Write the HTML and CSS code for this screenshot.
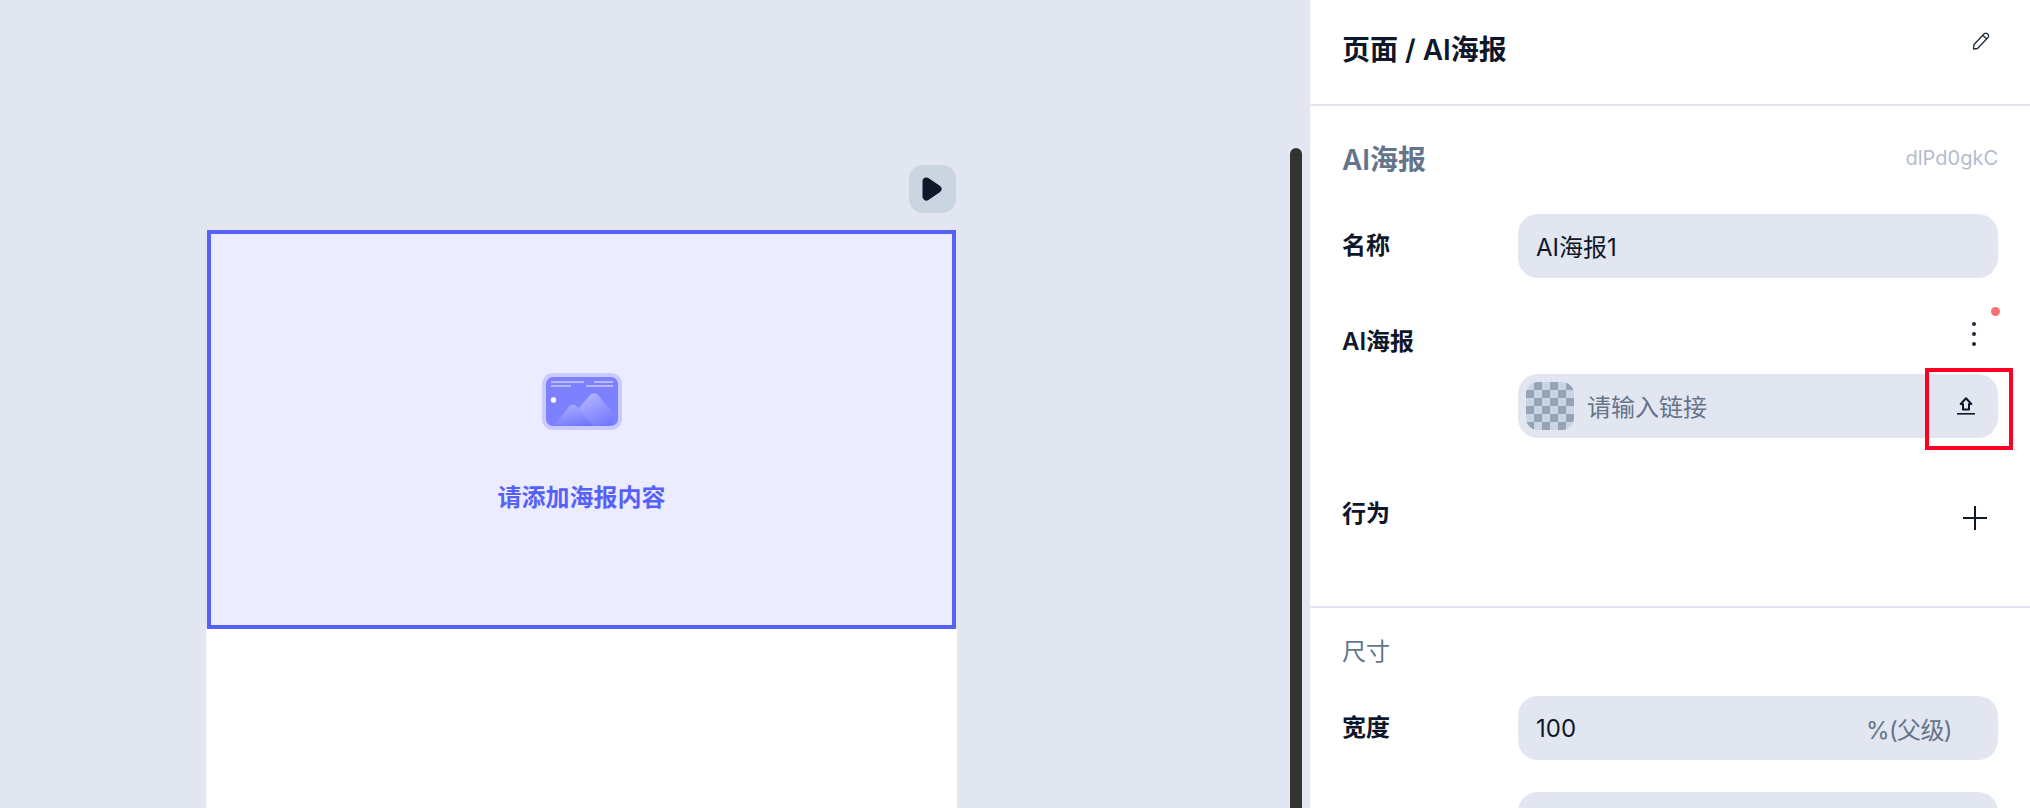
FILE: index.html
```html
<!DOCTYPE html>
<html lang="en">
<head>
    <meta charset="UTF-8">
    <meta name="viewport" content="width=device-width, initial-scale=1.0">
    <title>AI海报</title>
    <link rel="stylesheet" href="styles.css">
</head>
<body>

    <!-- Canvas -->
    <div class="canvas">
        <div class="page">
            <div class="toolbar">
                <button class="play-btn">
                    <svg width="20" height="24" viewBox="0 0 20 24"><path d="M4.500 4.500 L15.500 12 L4.500 19.500 Z" fill="#0f172a" stroke="#0f172a" stroke-width="8" stroke-linejoin="round"/></svg>
                </button>
            </div>
            <div class="poster">
                <svg class="poster-icon" width="80" height="57" viewBox="0 0 80 57">
                    <defs>
                        <linearGradient id="hillBack" x1="0.2" y1="0" x2="0.8" y2="1">
                            <stop offset="0" stop-color="#b5b7ff"/>
                            <stop offset="1" stop-color="#7377fc"/>
                        </linearGradient>
                        <linearGradient id="hillFront" x1="0.3" y1="0" x2="0.8" y2="1">
                            <stop offset="0" stop-color="#abaeff"/>
                            <stop offset="1" stop-color="#7074fb"/>
                        </linearGradient>
                    </defs>
                    <rect x="0" y="0" width="80" height="57" rx="11" fill="#c9cbff"/>
                    <rect x="4" y="4" width="72" height="49" rx="7" fill="#7d81ff"/>
                    <path d="M9 9H42M52 9H71M9 13H29M44 13H71" stroke="#c9cbff" stroke-width="1.5"/>
                    <circle cx="11.500" cy="27" r="2.700" fill="#fff"/>
                    <path d="M36 36 L48 22 Q52 18 56 22 L71 40 V47 Q71 53 65 53 H40Z" fill="url(#hillBack)"/>
                    <path d="M12 53 L27 33.500 Q31 29.500 35 33.500 L51 53Z" fill="url(#hillFront)"/>
                </svg>
                <p class="poster-text">请添加海报内容</p>
            </div>
            <div class="page-blank"></div>
        </div>
        <div class="scrollbar"></div>
    </div>

    <!-- Settings panel -->
    <div class="panel">
        <div class="panel-head">
            <h2>页面 / AI海报</h2>
            <svg class="edit-icon" width="20" height="20" viewBox="0 0 20 20" fill="none" stroke="#1e293b" stroke-width="1.300" stroke-linejoin="round">
                <path d="M3 13.500 L13.500 2.500 Q15 1.500 16.500 2.800 L17.500 4 Q18 5.500 17 6.500 L6.500 17.500 L2.500 18 Z"/>
                <path d="M12 4.500 L15.800 8"/>
            </svg>
        </div>

        <div class="section">
            <div class="section-head">
                <h3>AI海报</h3>
                <span class="comp-id">dlPd0gkC</span>
            </div>

            <div class="row row-name">
                <label>名称</label>
                <div class="field field-cjk">AI海报1</div>
            </div>

            <div class="image-head">
                <label>AI海报</label>
                <div class="more">
                    <i></i><i></i><i></i>
                    <span class="red-dot"></span>
                </div>
            </div>
            <div class="field field-cjk image-field">
                <div class="checker"></div>
                <span class="placeholder">请输入链接</span>
                <svg class="upload-icon" width="18" height="18" viewBox="0 0 18 18" fill="none" stroke="#0f172a">
                    <path d="M9 1.300 L14.300 7 H12 V12.500 H6 V7 H3.700 Z" stroke-width="2" stroke-linejoin="round"/>
                    <path d="M0 16.800 H18" stroke-width="1.600"/>
                </svg>
                <div class="mark-box"></div>
            </div>

            <div class="row-action">
                <label>行为</label>
                <svg class="plus-icon" width="26" height="26" viewBox="0 0 26 26" stroke="#0f172a" stroke-width="2"><path d="M13 1V25M1 13H25"/></svg>
            </div>
        </div>

        <div class="section section-size">
            <div class="section-title">尺寸</div>
            <div class="row">
                <label>宽度</label>
                <div class="field">100<span class="unit">%(父级)</span></div>
            </div>
            <div class="row row-next">
                <div class="field"></div>
            </div>
        </div>
    </div>

</body>
</html>
```

FILE: styles.css
```css
* {
    box-sizing: border-box;
}

body {
    font-family: Inter, "Noto Sans CJK SC", sans-serif;
    background-color: #e2e6f0;
    color: #0f172a;
    margin: 0;
    display: flex;
    height: 100vh;
    overflow: hidden;
}

/* Canvas */
.canvas {
    position: relative;
    flex: 1;
    padding: 165px 0 0 206px;
}

.page {
    width: 751px;
    height: 100%;
    display: flex;
    flex-direction: column;
}

.toolbar {
    display: flex;
    justify-content: flex-end;
    margin-bottom: 17px;
    padding-right: 1px;
}

.play-btn {
    width: 47.500px;
    height: 48px;
    border: none;
    padding: 0;
    border-radius: 14px;
    background-color: #cbd5e1;
    display: flex;
    align-items: center;
    justify-content: center;
}

.poster {
    height: 399px;
    flex-shrink: 0;
    margin: 0 1px;
    border: 4px solid #5660fa;
    background-color: #ebecff;
    display: flex;
    flex-direction: column;
    align-items: center;
    padding-top: 139px;
}

.poster-icon {
    display: block;
}

.poster-text {
    margin: 52px 0 0;
    font-size: 24px;
    line-height: 32px;
    font-weight: 600;
    color: #5660fa;
}

.page-blank {
    flex: 1;
    background-color: #fff;
}

.scrollbar {
    position: absolute;
    right: 8px;
    top: 148px;
    bottom: 0;
    width: 12px;
    border-radius: 6px 6px 0 0;
    background-color: #333330;
}

/* Settings panel */
.panel {
    width: 720px;
    background-color: #fff;
}

.panel-head {
    height: 106px;
    border-bottom: 2px solid #e2e6f0;
    display: flex;
    justify-content: space-between;
    padding: 31px 39px 0 32px;
}

.panel-head h2 {
    margin: 0;
    font-size: 28px;
    line-height: 38px;
    font-weight: 600;
}

.section {
    padding: 0 32px;
}

.section-head {
    display: flex;
    justify-content: space-between;
    align-items: center;
    height: 40px;
    margin-top: 32px;
}

.section-head h3 {
    margin: 0;
    font-size: 28px;
    font-weight: 600;
    color: #64748b;
}

.comp-id {
    font-size: 20px;
    color: #b4bdcb;
}

label {
    font-size: 24px;
    line-height: 32px;
    font-weight: 600;
}

.row {
    display: flex;
    align-items: center;
    justify-content: space-between;
    margin-bottom: 32px;
}

.row-name {
    margin-top: 36px;
}

.row-next {
    justify-content: flex-end;
}

.field {
    position: relative;
    width: 480px;
    height: 64px;
    border-radius: 20px;
    background-color: #e2e6f0;
    display: flex;
    align-items: center;
    padding-left: 18px;
    font-size: 24px;
}

.field-cjk {
    padding-bottom: 2px;
}

.unit {
    margin-left: auto;
    margin-right: 46px;
    color: #64748b;
    letter-spacing: -0.6px;
}

/* Image row */
.image-head {
    display: flex;
    justify-content: space-between;
    align-items: flex-start;
    height: 64px;
}

.image-head label {
    margin-top: 16px;
}

.more {
    position: relative;
    width: 4px;
    margin: 12px 22px 0 0;
    display: flex;
    flex-direction: column;
    gap: 6px;
}

.more i {
    width: 4px;
    height: 4px;
    border-radius: 50%;
    background-color: #1e293b;
}

.red-dot {
    position: absolute;
    left: 19px;
    top: -15px;
    width: 9px;
    height: 9px;
    border-radius: 50%;
    background-color: #f87171;
}

.image-field {
    margin-left: 176px;
    padding-left: 8px;
}

.checker {
    width: 48px;
    height: 48px;
    margin-top: 2px;
    border-radius: 12px;
    background-color: #cbd5e1;
    background-image: conic-gradient(#94a3b8 25%, transparent 0 50%, #94a3b8 0 75%, transparent 0);
    background-size: 16px 16px;
}

.placeholder {
    margin-left: 13px;
    color: #64748b;
}

.upload-icon {
    margin-top: 2px;
    margin-left: auto;
    margin-right: 23px;
}

/* the red highlight drawn over the upload button */
.mark-box {
    position: absolute;
    right: -15px;
    top: -6px;
    width: 88px;
    height: 82px;
    border: 4px solid #ff0022;
}

.row-action {
    display: flex;
    justify-content: space-between;
    align-items: flex-start;
    height: 40px;
    margin-top: 56px;
    padding-right: 10px;
}

.row-action label {
    margin-top: 4px;
}

.plus-icon {
    margin-top: 11px;
}

/* Size section */
.section-size {
    margin-top: 72px;
    border-top: 2px solid #e2e6f0;
    padding-top: 29px;
}

.section-title {
    font-size: 24px;
    line-height: 30px;
    color: #64748b;
    margin-bottom: 29px;
}
```
